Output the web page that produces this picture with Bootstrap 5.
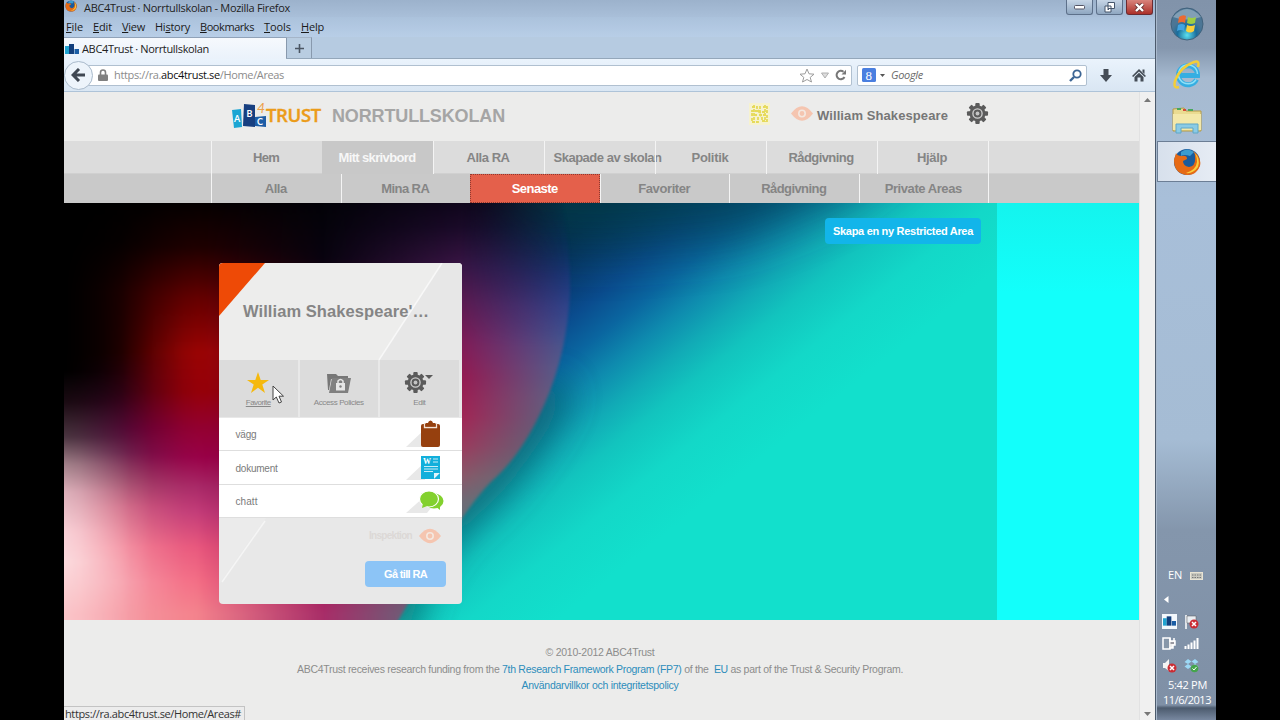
<!DOCTYPE html>
<html lang="sv">
<head>
<meta charset="utf-8">
<meta name="viewport" content="width=device-width, initial-scale=1">
<title>ABC4Trust · Norrtullskolan</title>
<link rel="stylesheet" href="https://cdn.jsdelivr.net/npm/bootstrap@5.3.0/dist/css/bootstrap.min.css">
<style>
body{background:#000;width:1280px;height:720px;overflow:hidden;padding:0 64px;color:#222;font:11px/14px "Open Sans","Noto Sans",sans-serif}
svg{display:block;flex:none}
.fit{display:inline-block;white-space:nowrap}
.web{font-family:"Liberation Sans",Arial,sans-serif}
.window{width:1092px;height:720px;background:#ececeb;border-right:1px solid #4b5a6c}
/* browser chrome */
.titlebar{height:17px;background:linear-gradient(#9cb2cc,#a9bfd9);padding-left:1px;gap:7px}
.menubar{height:20px;background:linear-gradient(#abc2dc,#b8cee7);padding-left:2px;gap:10px;color:#1a1a1a}
.menubar u{text-underline-offset:1px}
.tabs{height:22px;background:#b6cbe1;border-bottom:1px solid #94a7ba}
.tab-on{width:222px;height:22px;background:linear-gradient(#f6f9fd,#eaf2fb);border-top:1px solid #90a2b8;padding-left:1px;gap:3px}
.tab-plus{width:26px;height:21px;background:#b9cde1;border:1px solid #8899ad;border-top-color:#a5b5c8;border-bottom:0}
.toolbar{height:33px;background:linear-gradient(#eaf3fc,#d9e6f3);border-bottom:1px solid #aec3d8}
.back-btn{width:29px;height:29px;border:1px solid #a9bacb;border-radius:50%;background:#edf4fb;z-index:1}
.field{height:21px;background:#fff;border:1px solid #b0c0d0;border-radius:2px}
.url-field{width:771px;margin-left:-12px;padding-left:16px;color:#8b8b8b}
.url-field b{font-weight:400;color:#111}
.search-field{width:230px;margin-left:5px;padding:0 4px 0 4px;font-style:italic;color:#6a6a6a}
.win-btn{width:27px;height:15px;border:1px solid #5d708a;border-top:0;border-radius:0 0 3px 3px;background:linear-gradient(#c6d5e6,#8fa7c1)}
.win-close{background:linear-gradient(#d8847c,#ac3029);border-color:#6b2b31}
/* page */
.page-view{width:1075px}
.scroller{width:16px;background:#f0f0f0;border-left:1px solid #e2e2e2}
.site-head{height:49px;background:#ececeb;color:#777}
.site-name{font:700 18px/22px "Liberation Sans",Arial,sans-serif;color:#a5a5a5}
.nav-a{height:33px;background:#dcdcdc;padding-left:147px;box-shadow:inset 0 -1px #d0d0d0}
.nav-b{height:29px;background:#c9c9c9;padding-left:147px}
.nav-a,.nav-b{font:700 13px/16px "Liberation Sans",Arial,sans-serif;color:#858585}
.cell{display:flex;align-items:center;justify-content:center;border-left:1px solid #f4f4f4}
.nav-a .cell{width:111px;padding-right:2px}
.nav-b .cell{width:129.500px;padding-right:1px}
.nav-a .on{background:#c8c8c8;color:#f7f7f7;border-color:#c8c8c8}
.nav-b .on{background:#e4604b;color:#fff;border:1px dotted #8e3a30;padding-right:0}
.nav-a .last,.nav-b .last{width:1px;padding:0}
/* hero */
.hero{height:416.5px;display:grid;overflow:hidden}
.hero>*{grid-area:1/1}
.orb-soft{margin:-6px;filter:blur(1.5px);display:grid;min-width:0}
.orb-field{display:grid;clip-path:path("M0 0H503Q513 56 512 96Q509 156 487 206T436 282T337 429H0Z")}
.orb-field>*{grid-area:1/1}
.c5{background:linear-gradient(#05264a 0,#0b2f66 40px,#2a3580 80px,#3d448d 110px,#435590 140px,#4f6190 170px,#56698a 200px,#4d7080 250px,#3a8084 300px,#12938e 417px);-webkit-mask-image:linear-gradient(transparent 0,#000 150px)}
.c4{background:linear-gradient(#0d0518 0,#1a0a28 30px,#3a1545 70px,#5c1a50 105px,#801a55 145px,#96184f 180px,#a32453 220px,#9c3a5c 250px,#8a5868 280px,#706a75 305px,#4a7a80 417px);-webkit-mask-image:linear-gradient(90deg,#000 400px,transparent 512px)}
.c3{background:linear-gradient(#020207 0,#08030f 60px,#500028 200px,#a81f5e 395px,#a82d68 417px);-webkit-mask-image:linear-gradient(90deg,#000 266px,transparent 400px)}
.c2{background:linear-gradient(#020000 0,#200000 50px,#680000 100px,#a20404 155px,#9c0008 195px,#980030 230px,#9c0048 260px,#aa2868 290px,#c23a78 315px,#e8557c 350px,#f46c84 385px,#f4828c 417px);-webkit-mask-image:linear-gradient(90deg,#000 139px,transparent 266px)}
.c1{background:linear-gradient(#000 0,#060000 45px,#1c0000 95px,#1c0000 155px,#2a0018 195px,#4c0034 230px,#601646 255px,#964463 283px,#d06680 310px,#f48c9c 350px,#f6a0ac 385px,#f59aa4 417px);-webkit-mask-image:linear-gradient(90deg,#000 40px,rgba(0,0,0,.88) 64px,rgba(0,0,0,.15) 125px,transparent 150px)}
.c0{background:linear-gradient(#000 0,#000 175px,#1a0a12 205px,#4a3540 240px,#a08088 267px,#dcb0ba 295px,#f8d0d6 335px,#fbdadd 365px,#fac4c8 417px);-webkit-mask-image:linear-gradient(90deg,#000 6px,rgba(0,0,0,.85) 22px,rgba(0,0,0,.15) 72px,transparent 95px)}
.pane-shade{margin-left:139px;width:160px;background:linear-gradient(90deg,rgba(25,25,25,.27) 20px,rgba(25,25,25,0))}
.hero-right{margin-left:933px;background:linear-gradient(#14f4ee,#12fffb 90px)}
.btn-new{width:156px;height:26px;background:#12b5ea;border-radius:4px;margin:15px 0 0 761px;color:#fff;font-weight:700}
.area-card{width:243px;height:341px;margin:60px 0 0 155px;border-radius:4px;overflow:hidden;background:#e8e8e8;z-index:1;color:#777}
.card-top{height:97px;display:grid}
.card-top>*{grid-area:1/1}
.card-title{font:700 16.5px/20px "Liberation Sans",Arial,sans-serif;color:#858585;margin:38px 0 0 24px}
.tools{height:58px;gap:2px;padding-bottom:1px;font-size:8px;line-height:10px;color:#888}
.tool{width:78.5px;background:#dcdcdc;padding-top:10px}
.item{height:33.4px;background:#fff;border-bottom:1px solid #dedede;padding:0 17px 0 16.5px;font-size:10px;color:#7b7b7b}
.item .fit{padding-top:2px}
.btn-go{width:81px;height:26px;background:#8cc4f6;border-radius:4px;color:#fff;font-weight:700}
.foot{font-size:10.5px;line-height:16.5px;color:#8c8c8c;padding-top:24.5px}
.foot a{color:#2d8dbb;text-decoration:none}
.status{left:64px;bottom:0;width:181px;height:14px;background:#ececec;border:1px solid #c3c3c3;border-left:0;border-bottom:0;padding-left:1px;z-index:3;color:#333}
.pointer-arrow{left:272px;top:385px;z-index:4}
/* taskbar */
.taskbar{width:60px;height:720px;background:linear-gradient(#8193aa 0,#8597ae 48px,#a6bad0 78px,#a8bfd9 200px,#a5bcd4 440px,#8496ac 530px,#7f90a6 705px,#4c5b6e 708px,#7888a0 720px);border-left:1px solid #a9b9cc;color:#fff}
.task-on{height:41px;background:linear-gradient(90deg,#d7e0ec,#e6ecf4);border:1px solid #6c7e95;border-right:0}
.tray{width:46px;display:grid;grid-template-columns:22px 23px;row-gap:7px;margin-left:-1px}
</style>
</head>
<body class="d-flex">
<svg width="0" height="0" class="position-absolute"><defs>
 <symbol id="cog" viewBox="-12 -12 24 24"><g fill="#5b5b5b"><g id="teeth"><rect x="-2.3" y="-11" width="4.6" height="22" rx="1"/><rect x="-11" y="-2.3" width="22" height="4.6" rx="1"/></g><use href="#teeth" transform="rotate(45)"/><circle r="8.3"/></g><circle r="4.800" fill="none" stroke="#cfcfcf" stroke-width="1.400"/><circle r="2" fill="#c4c4c4"/></symbol>
 <symbol id="eye" viewBox="0 0 22 15"><path d="M0 7.500Q11-7 22 7.500Q11 22 0 7.500Z" fill="#f5c5b0"/><circle cx="11" cy="7.500" r="3.200" fill="none" stroke="#f4e8e0" stroke-width="1.600"/></symbol>
 <symbol id="fox" viewBox="0 0 28 28"><circle cx="14" cy="14" r="13" fill="#1a5b9c"/><path d="M8 4Q14-1 21 4L17 8Q11 6 8 8Z" fill="#3c9cd0"/><path d="M3 5Q4 8 9 8Q14 7 14 11L10 13Q10 18 16 19Q23 18 22 9Q22 5 20 3Q29 9 27 18Q23 28 13 27Q1 25 1 12Z" fill="#e66a15"/><path d="M21 4Q28 11 25 19Q20 26 13 25Q23 22 24 14Q24 8 21 4Z" fill="#f9cf3e"/></symbol>
 <symbol id="blocks" viewBox="0 0 14 12"><rect y="3" width="4" height="8" fill="#1fa3d0"/><rect x="4" y="1" width="5" height="10" fill="#123f7c"/><rect x="9.500" y="6" width="4.500" height="5" fill="#1b5ea5"/></symbol>
</defs></svg>

<main class="window d-flex flex-column">
 <div class="titlebar d-flex">
  <svg width="12" height="12" class="mt-0"><use href="#fox"/></svg>
  <div class="fit" data-w="206" style="margin-top:1px">ABC4Trust · Norrtullskolan - Mozilla Firefox</div>
  <div class="d-flex ms-auto pe-0" style="gap:3px;margin-right:2px">
   <div class="win-btn d-flex align-items-center justify-content-center"><svg width="11" height="5"><rect x=".5" y=".5" width="10" height="3.500" rx="1" fill="#fff" stroke="#556"/></svg></div>
   <div class="win-btn d-flex align-items-center justify-content-center"><svg width="12" height="11"><path d="M4 .5H10.500V6.500H4ZM1 4H7V10H1Z" fill="#fff" stroke="#45556b"/><path d="M3.500 6.500H5V8H3.500Z" fill="#45556b"/></svg></div>
   <div class="win-btn win-close d-flex align-items-center justify-content-center"><svg width="11" height="9"><path d="M2 1L9 8M9 1L2 8" stroke="#633" stroke-width="4"/><path d="M2 1L9 8M9 1L2 8" stroke="#fff" stroke-width="2.400"/></svg></div>
  </div>
 </div>
 <div class="menubar d-flex align-items-center">
  <span class="fit" data-w="17"><u>F</u>ile</span><span class="fit" data-w="19"><u>E</u>dit</span><span class="fit" data-w="23"><u>V</u>iew</span><span class="fit" data-w="35">Hi<u>s</u>tory</span><span class="fit" data-w="54"><u>B</u>ookmarks</span><span class="fit" data-w="27"><u>T</u>ools</span><span class="fit" data-w="23"><u>H</u>elp</span>
 </div>
 <div class="tabs d-flex">
  <div class="tab-on d-flex align-items-center"><svg width="14" height="12"><use href="#blocks"/></svg><span class="fit" data-w="127">ABC4Trust · Norrtullskolan</span></div>
  <div class="tab-plus d-flex align-items-center justify-content-center"><svg width="9" height="9"><path d="M4.500 0V9M0 4.500H9" stroke="#4b5663" stroke-width="1.600"/></svg></div>
 </div>
 <div class="toolbar d-flex align-items-center">
  <div class="back-btn d-flex align-items-center justify-content-center"><svg width="15" height="14"><path d="M8 1L2 7L8 13M2 7H14" fill="none" stroke="#3f4752" stroke-width="3"/></svg></div>
  <div class="field url-field d-flex align-items-center">
   <svg width="10" height="12"><path d="M2.500 6V3.500Q2.500 1 5 1T7.500 3.500V6" fill="none" stroke="#808080" stroke-width="1.600"/><rect y="5.500" width="10" height="6.500" rx="1" fill="#808080"/></svg>
   <span class="fit" style="margin-left:6px" data-w="170">https://ra.<b>abc4trust.se</b>/Home/Areas</span>
   <div class="d-flex align-items-center ms-auto" style="gap:6px;padding-right:4px">
    <svg width="16" height="15"><path d="M8 1L10 5.800L15 6.200L11.200 9.400L12.500 14L8 11.500L3.500 14L4.800 9.400L1 6.200L6 5.800Z" fill="none" stroke="#9c9c9c"/></svg>
    <svg width="8" height="7"><path d="M.5 1H7.500L4 6Z" fill="#ddd" stroke="#b0b0b0"/></svg>
    <svg width="12" height="12"><path d="M9.500 8A4.200 4.200 0 1 1 8.500 2.800" fill="none" stroke="#777" stroke-width="2"/><path d="M6.500 5.500H11V.8Z" fill="#777"/></svg>
   </div>
  </div>
  <div class="field search-field d-flex align-items-center">
   <svg width="14" height="14"><rect width="14" height="14" rx="1.500" fill="#4a7fe0"/><text x="3.600" y="11.500" fill="#fff" font-size="13" font-style="normal" font-family="Liberation Serif">8</text></svg>
   <svg width="5" height="3" style="margin-left:4px"><path d="M0 0H5L2.500 3Z" fill="#555"/></svg>
   <span class="fit" style="margin-left:6px" data-w="32">Google</span>
   <svg width="13" height="13" class="ms-auto"><circle cx="8" cy="5" r="3.700" fill="none" stroke="#3c6594" stroke-width="1.800"/><path d="M5 8L1 12" stroke="#3c6594" stroke-width="2.400"/></svg>
  </div>
  <svg width="12" height="13" style="margin-left:13px"><path d="M3.500 0H8.500V6H12L6 13L0 6H3.500Z" fill="#454d57"/></svg>
  <svg width="14" height="14" style="margin-left:20px"><path d="M0 8L7 1L14 8L12.800 9L7 3.500L1.200 9Z" fill="#454d57"/><path d="M10.500 1.500H12.500V6L10.500 4ZM2.500 9L7 4.800L11.500 9V13.500H8.500V9.500H5.500V13.500H2.500Z" fill="#454d57"/></svg>
 </div>

 <div class="d-flex flex-grow-1 web">
  <div class="page-view">
   <header class="site-head d-flex" style="padding:0 0 0 168px">
    <svg width="34" height="32" style="margin-top:8px" font-family="Lato,sans-serif" font-weight="700" fill="#fff"><path d="M0 10L9 9L10 27L2 28Z" fill="#1ba5d3"/><path d="M12 4L23 5V27L11 26Z" fill="#173f80"/><path d="M23 17L34 16V27L23 26Z" fill="#1d5da6"/><text x="2" y="22" font-size="9">A</text><text x="14.500" y="17" font-size="9">B</text><text x="25" y="25" font-size="9">C</text><text x="25" y="13" font-size="14" font-weight="400" font-style="italic" fill="#eda04a">4</text></svg>
    <div style="margin:10px 1px 0 0;font:600 18.5px/26px 'Open Sans',sans-serif;color:#eb9c1a;-webkit-text-stroke:.4px #eb9c1a"><span class="fit" data-w="55">TRUST</span></div>
    <div class="site-name" style="margin:13px 0 0 10px"><span class="fit" data-w="173">NORRTULLSKOLAN</span></div>
    <svg width="21" height="22" style="margin:11px 0 0 244px"><rect width="21" height="22" fill="#f6f2cf"/><path d="M3 4H8V8H3V12H8M11 3V9H18V4H14M10 12H18V18H13V14M3 15V19H9V14M5 2V19M16 2V19M9 7L13 15" fill="none" stroke="#e6da5a" stroke-width="1.800" stroke-dasharray="3 1"/></svg>
    <svg width="22" height="15" style="margin:14px 0 0 21px"><use href="#eye"/></svg>
    <div style="margin:15px 0 0 4px;font:700 13px/17px 'Liberation Sans'"><span class="fit" data-w="131">William Shakespeare</span></div>
    <svg width="23" height="23" style="margin:10px 0 0 18px"><use href="#cog"/></svg>
   </header>
   <nav class="nav-a d-flex">
    <div class="cell"><span class="fit" data-w="26">Hem</span></div><div class="cell on"><span class="fit" data-w="77">Mitt skrivbord</span></div><div class="cell"><span class="fit" data-w="43">Alla RA</span></div><div class="cell"><span class="fit" data-w="108" style="margin-left:17px;margin-right:0">Skapade av skolan</span></div><div class="cell"><span class="fit" data-w="37">Politik</span></div><div class="cell"><span class="fit" data-w="65">Rådgivning</span></div><div class="cell"><span class="fit" data-w="30">Hjälp</span></div><div class="cell last"></div>
   </nav>
   <nav class="nav-b d-flex">
    <div class="cell"><span class="fit" data-w="22">Alla</span></div><div class="cell"><span class="fit" data-w="48">Mina RA</span></div><div class="cell on"><span class="fit" data-w="46">Senaste</span></div><div class="cell"><span class="fit" data-w="52">Favoriter</span></div><div class="cell"><span class="fit" data-w="65">Rådgivning</span></div><div class="cell"><span class="fit" data-w="77">Private Areas</span></div><div class="cell last"></div>
   </nav>

   <section class="hero">
    <svg width="1075" height="417" viewBox="64 203 1075 417">
     <defs>
      <linearGradient id="sea" gradientUnits="userSpaceOnUse" x1="272.800" y1="343.200" x2="517.700" y2="651.300"><stop offset="0" stop-color="#0b0515"/><stop offset=".26" stop-color="#062b55"/><stop offset=".42" stop-color="#0a4c8e"/><stop offset=".5" stop-color="#0a66a0"/><stop offset=".58" stop-color="#0e8aae"/><stop offset=".66" stop-color="#11aab6"/><stop offset=".74" stop-color="#12c4be"/><stop offset=".86" stop-color="#13d8c8"/><stop offset="1" stop-color="#12e0cc"/></linearGradient>
      <filter id="soft" x="-30%" y="-60%" width="160%" height="220%"><feGaussianBlur stdDeviation="26"/></filter>
      <filter id="soft2" x="-60%" y="-30%" width="220%" height="160%"><feGaussianBlur stdDeviation="18"/></filter>
     </defs>
     <rect x="64" y="203" width="1075" height="417" fill="url(#sea)"/>
     <path d="M480 120L930 120L850 190L740 235L600 245L500 240Z" fill="#044048" opacity=".7" filter="url(#soft)"/>
     <path d="M556 385Q520 460 465 507T395 640" fill="none" stroke="#075a62" stroke-width="30" opacity=".85" filter="url(#soft2)"/>
    </svg>
    <div class="orb-soft"><div class="orb-field"><div class="c5"></div><div class="c4"></div><div class="c3"></div><div class="c2"></div><div class="c1"></div><div class="c0"></div></div></div>
    <div class="pane-shade"></div>
    <div class="hero-right"></div>
    <a href="#" class="btn-new d-flex align-items-center justify-content-center text-decoration-none"><span class="fit" data-w="140">Skapa en ny Restricted Area</span></a>

    <article class="area-card">
     <div class="card-top">
      <svg width="243" height="97"><rect width="243" height="97" fill="#ededec"/><path d="M223 0H243V97H160Z" fill="#e7e7e7"/><path d="M223 0L160 97" stroke="#f8f8f8" stroke-width="1.500"/><path d="M0 0H46L0 53Z" fill="#ee4a06"/></svg>
      <div class="card-title"><span class="fit" data-w="186">William Shakespeare'…</span></div>
     </div>
     <div class="tools d-flex">
      <div class="tool d-flex flex-column align-items-center"><svg width="24" height="24" viewBox="-1 0 24 24"><path d="M11 2L13.700 10H22L15.300 14.500L18 23L11 17.800L4 23L6.700 14.500L0 10H8.300Z" fill="#f5b90e"/></svg><u class="fit" style="margin-top:4px" data-w="25">Favorite</u></div>
      <div class="tool d-flex flex-column align-items-center"><svg width="26" height="24"><path d="M1 4H10L12 6H22V9H5L3 20H2Z" fill="#777"/><path d="M6 8H25L22 23H3Z" fill="#808080"/><rect x="10" y="13" width="9" height="7.500" fill="#e6e6e6"/><path d="M12 13V11Q14.500 8 17 11V13" fill="none" stroke="#e6e6e6" stroke-width="1.500"/><circle cx="14.500" cy="16.500" r="1.200" fill="#808080"/></svg><span class="fit" style="margin-top:4px" data-w="50">Access Policies</span></div>
      <div class="tool d-flex flex-column align-items-center"><svg width="30" height="24"><use href="#cog" x="0" y="1" width="23" height="23"/><path d="M21 5H29L25 9Z" fill="#5b5b5b"/></svg><span class="fit" style="margin-top:4px" data-w="12">Edit</span></div>
     </div>
     <div class="item d-flex align-items-center justify-content-between"><span class="fit" data-w="21">vägg</span>
      <svg width="40" height="33"><path d="M1 29L20 11V29Z" fill="#e8e8e8"/><rect x="16" y="6" width="19" height="23" rx="2" fill="#96400e"/><path d="M19.500 5V9.500H31.500V5" fill="none" stroke="#f3e2d6" stroke-width="1.300"/><path d="M20.500 5H23Q23.500 2.500 25.500 2.500T28 5H30.500V8.500H20.500Z" fill="#96400e"/></svg></div>
     <div class="item d-flex align-items-center justify-content-between"><span class="fit" data-w="42">dokument</span>
      <svg width="40" height="33"><path d="M1 29L20 11V29Z" fill="#e8e8e8"/><path d="M16 5H35V22L29 28H16Z" fill="#12afdb"/><path d="M35 22L29 28V22Z" fill="#dff4fb"/><path d="M35 22V28H29Z" fill="#12afdb"/><text x="18" y="13" fill="#fff" font-family="Liberation Serif" font-weight="700" font-size="8">W</text><path d="M28 8H33M28 11H33M19 15.500H33M19 18H33M19 20.500H28" stroke="#c7ecf7"/></svg></div>
     <div class="item d-flex align-items-center justify-content-between"><span class="fit" data-w="22">chatt</span>
      <svg width="40" height="33"><path d="M1 29L20 12L26 24L22 29Z" fill="#e8e8e8"/><ellipse cx="29" cy="17" rx="9.500" ry="7.500" fill="#83d12e"/><path d="M30 22L35 26L35 20Z" fill="#83d12e"/><ellipse cx="24" cy="15" rx="9.500" ry="8" fill="#83d12e" stroke="#fff" stroke-width="1.200"/><path d="M18 19L17 24L25 21Z" fill="#83d12e"/></svg></div>
     <div style="display:grid">
      <svg width="243" height="86" style="grid-area:1/1"><path d="M0 0H47L0 66Z" fill="#ebebeb"/><path d="M46 3L3 64" stroke="#f5f5f5" stroke-width="1.500"/></svg>
      <div class="d-flex flex-column align-items-end" style="grid-area:1/1;padding:10px 16px 0 0">
       <div class="d-flex align-items-center" style="gap:7px;padding-right:5px;color:#dcd8d6;font-weight:700;font-size:10px"><span class="fit" data-w="43">Inspektion</span><svg width="22" height="16"><use href="#eye"/></svg></div>
       <a href="#" class="btn-go d-flex align-items-center justify-content-center text-decoration-none" style="margin-top:17px"><span class="fit" data-w="43">Gå till RA</span></a>
      </div>
     </div>
    </article>
   </section>

   <footer class="foot text-center" style="padding-right:3px">
    <div><span class="fit" data-w="109">© 2010-2012 ABC4Trust</span></div>
    <div><span class="fit" data-w="606">ABC4Trust receives research funding from the <a href="#">7th Research Framework Program (FP7)</a> of the&nbsp; <a href="#">EU</a> as part of the Trust &amp; Security Program.</span></div>
    <div><span class="fit" data-w="157"><a href="#">Användarvillkor och integritetspolicy</a></span></div>
   </footer>
  </div>
  <div class="scroller d-flex flex-column justify-content-between align-items-center" style="padding:6px 0 4px">
   <svg width="7" height="4"><path d="M0 4L3.500 0L7 4Z" fill="#777"/></svg><svg width="7" height="4"><path d="M0 0H7L3.500 4Z" fill="#777"/></svg>
  </div>
 </div>
</main>

<aside class="taskbar d-flex flex-column">
 <div class="d-flex flex-column align-items-center" style="height:141px;padding-top:7px">
  <svg width="34" height="34"><defs><radialGradient id="rb" cy=".85"><stop offset="0" stop-color="#5ce0ee"/><stop offset=".6" stop-color="#1a6d9c"/><stop offset="1" stop-color="#4c7695"/></radialGradient></defs><circle cx="17" cy="17" r="16" fill="url(#rb)" stroke="#41627c"/><path d="M3 10Q17-6 31 10Q17 15 3 10Z" fill="#fff" opacity=".3"/><path d="M9 10Q13 7 16 9L15 16Q12 14 8 16Z" fill="#ec6a32"/><path d="M18 10Q22 12 26 10L25 16Q21 18 17 16Z" fill="#9fce42"/><path d="M8 18Q12 16 15 18L14 24Q11 22 7 24Z" fill="#42a5e2"/><path d="M17 18Q21 20 25 18L24 24Q20 27 16 24Z" fill="#fbd03a"/></svg>
  <svg width="30" height="30" style="margin-top:18px"><path d="M24.500 20.500A9.500 9.500 0 1 1 25.500 16.500H9" fill="none" stroke="#35aee2" stroke-width="5"/><path d="M24 20.500A9.500 9.500 0 1 1 25.500 15" fill="none" stroke="#8fe0f7" stroke-width="1.500"/><path d="M7 28Q1 30 3 22Q8 8 22 3Q28 1 26 8" fill="none" stroke="#f3ce37" stroke-width="2.500"/></svg>
  <svg width="32" height="28" style="margin-top:17px"><path d="M2 3L13 2L15 5H30V25H2Z" fill="#eadb91" stroke="#b39b48"/><path d="M2 8H30V24H2Z" fill="#f3e8aa"/><path d="M6 3H10M17 4H22" stroke="#48a85c" stroke-width="2"/><path d="M12 4H15" stroke="#d64a37" stroke-width="2"/><path d="M5 27V18H27V27H22V22H10V27Z" fill="#8bcbe5" stroke="#5ea7c8"/></svg>
 </div>
 <div class="task-on d-flex align-items-center justify-content-center"><svg width="28" height="28"><use href="#fox"/></svg></div>
 <div class="mt-auto d-flex flex-column" style="padding:0 0 13px 6px">
  <div class="d-flex align-items-center" style="padding-left:5px;gap:8px"><span class="fit" data-w="14">EN</span><svg width="13" height="9"><rect x=".5" y="1.500" width="12" height="7" fill="#c9c9c0" stroke="#e9e4d4"/><path d="M2 4H11M2 6.500H11" stroke="#777" stroke-dasharray="1.500 1"/></svg></div>
  <svg width="5" height="7" style="margin:14px 0 11px 1px"><path d="M4.500 0V7L0 3.500Z" fill="#fff"/></svg>
  <div class="tray">
   <svg width="15" height="15"><rect width="15" height="15" fill="#f3f8fc"/><use href="#blocks" x="1" y="1" width="13" height="12"/></svg>
   <svg width="15" height="15"><path d="M2 1V15" stroke="#fff" stroke-width="1.500"/><path d="M3 2H12V9H3Z" fill="#e9eef3" stroke="#555" stroke-width=".5"/><circle cx="10" cy="10" r="4.500" fill="#cb2d34"/><path d="M8 8L12 12M12 8L8 12" stroke="#fff" stroke-width="1.500"/></svg>
   <svg width="15" height="15"><rect x="1" y="2" width="7" height="11" fill="#8797a9" stroke="#fff" stroke-width="1.500"/><path d="M7 5H13V9H11V12H7M8 2V5M12 2V5" fill="#eee" stroke="#fff" stroke-width="1.500"/><path d="M8.500 7H12" stroke="#445"/></svg>
   <svg width="15" height="15"><path d="M1.500 10V13M4.500 8.500V13M7.500 6.500V13M10.500 4.500V13M13.500 2V13" stroke="#fff" stroke-width="2"/></svg>
   <svg width="15" height="15"><path d="M1 5H3L7 1V13L3 10H1Z" fill="#f4f4f4"/><circle cx="10" cy="10" r="4.500" fill="#cb2d34"/><path d="M8 8L12 12M12 8L8 12" stroke="#fff" stroke-width="1.500"/></svg>
   <svg width="15" height="15"><path d="M4 1L7.500 3.500L4 6L.5 4ZM11 1L14.500 4L11 6L7.500 3.500ZM4 6L7.500 8.500L4 11L.5 8.500ZM11 6L14.500 8.500L11 11L7.500 8.500Z" fill="#9cd8f5"/><circle cx="10.500" cy="10.500" r="3.800" fill="#45a54c"/><path d="M8.500 10.500L10 12L12.500 9" fill="none" stroke="#fff"/></svg>
  </div>
  <div style="margin:5px 0 0 5px"><span class="fit" data-w="39">5:42 PM</span></div>
  <div style="margin:1px 0 0 0"><span class="fit" data-w="48">11/6/2013</span></div>
 </div>
</aside>

<div class="status position-absolute d-flex align-items-center"><span class="fit" data-w="176">https://ra.abc4trust.se/Home/Areas#</span></div>
<svg class="pointer-arrow position-absolute" width="13" height="19"><path d="M1 1V15L4.300 12L7 18L9.500 17L7 11.200H11.500Z" fill="#fff" stroke="#444"/></svg>

<script src="https://cdn.jsdelivr.net/npm/bootstrap@5.3.0/dist/js/bootstrap.bundle.min.js"></script>
<script>
// Track each label out to its stated width.
document.querySelectorAll('.fit').forEach(function(el){
  el.style.flex='none';
  var extra=Number(el.dataset.w)-el.getBoundingClientRect().width;
  el.style.letterSpacing=(extra/el.textContent.length).toFixed(3)+'px';
});
</script>
</body>
</html>
